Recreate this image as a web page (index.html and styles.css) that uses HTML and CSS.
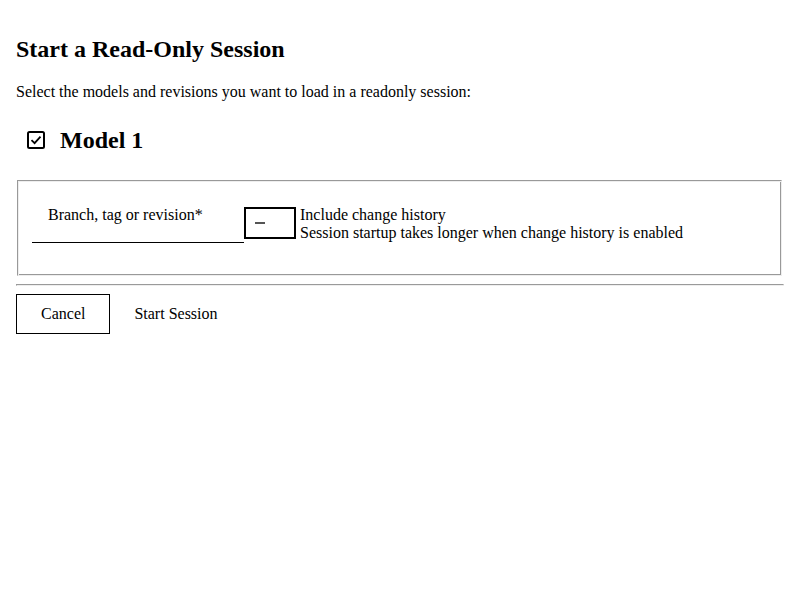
FILE: index.html
```html
<!DOCTYPE html>
<html>
<head>
<meta charset="utf-8">
<link rel="stylesheet" href="styles.css">
</head>
<body>
<div class="dialog">
  <h2 class="title">Start a Read-Only Session</h2>
  <p class="intro">Select the models and revisions you want to load in a readonly session:</p>
  <div class="model-head">
    <span class="check">
      <svg width="18" height="18" viewBox="0 0 18 18"><rect x="1" y="1" width="16" height="16" rx="1.5" fill="none" stroke="#000" stroke-width="2"/><path d="M4.5 9.2 L7.6 12.2 L13.5 5.6" fill="none" stroke="#000" stroke-width="1.8"/></svg>
    </span>
    <span class="model-name">Model 1</span>
  </div>
  <fieldset class="model-box">
    <div class="row">
      <div class="field">
        <span class="field-label">Branch, tag or revision*</span>
      </div>
      <div class="toggle"><span class="dash"></span></div>
      <div class="hist">
        <div>Include change history</div>
        <div>Session startup takes longer when change history is enabled</div>
      </div>
    </div>
  </fieldset>
  <hr class="sep">
  <div class="actions">
    <button class="btn btn-outline">Cancel</button>
    <button class="btn btn-plain">Start Session</button>
  </div>
</div>
</body>
</html>
```
FILE: styles.css
```css
html, body {
  margin: 0;
  padding: 0;
  background: #fff;
}
body {
  font-family: "Liberation Serif", "Times New Roman", serif;
  font-size: 16px;
  color: #000;
}
.dialog {
  padding: 16px;
}
.title {
  font-size: 24px;
  font-weight: bold;
  margin: 19px 0 0;
  line-height: 28px;
}
.intro {
  margin: 20px 0 0;
  line-height: 18px;
}
.model-head {
  display: flex;
  align-items: center;
  margin-top: 26px;
  height: 26px;
}
.check {
  display: flex;
  margin-left: 11px;
  width: 18px;
  height: 18px;
}
.model-name {
  margin-left: 15px;
  font-size: 24px;
  font-weight: bold;
}
.model-box {
  margin: 27px 2px 0 1px;
  padding: 8px 12px 11px 14px;
  border-style: solid;
  border-width: 1px;
  border-color: #999 #eee #eee #999;
  box-shadow: inset 1px 1px 0 #eee, inset -1px -1px 0 #999;
  min-height: 75px;
}
.row {
  display: flex;
  align-items: flex-start;
}
.field {
  width: 212px;
  height: 54px;
  border-bottom: 1px solid #000;
  box-sizing: border-box;
  padding: 17px 0 0 16px;
}
.field-label {
  line-height: 18px;
}
.toggle {
  margin-top: 18px;
  width: 52px;
  height: 32px;
  box-sizing: border-box;
  border: 2px solid #000;
  display: flex;
  align-items: center;
}
.dash {
  display: block;
  width: 10px;
  height: 2px;
  background: #555;
  margin-left: 9px;
}
.hist {
  margin-top: 17px;
  margin-left: 4px;
  line-height: 18px;
}
.sep {
  margin: 8px 0 0;
  border-style: inset;
  border-width: 1px;
}
.actions {
  display: flex;
  margin-top: 8px;
}
.btn {
  font-family: inherit;
  font-size: 16px;
  height: 40px;
  padding: 0 24px 0 24px;
  background: #fff;
  color: #000;
  margin: 0;
}
.btn-outline {
  border: 1px solid #000;
}
.btn-plain {
  border: 1px solid transparent;
  padding-left: 23px;
}
```
